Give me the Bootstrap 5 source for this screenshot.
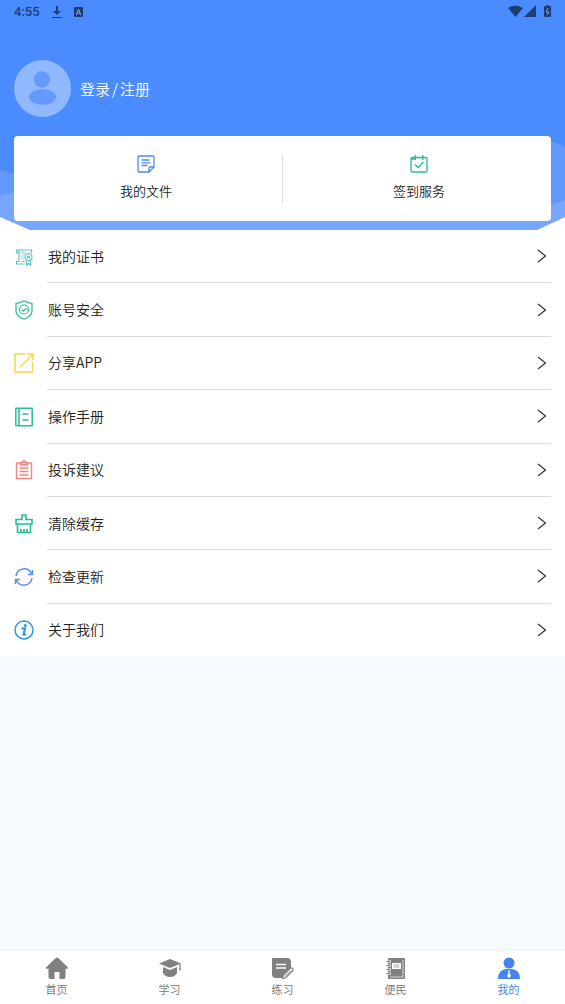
<!DOCTYPE html>
<html lang="zh-CN">
<head>
<meta charset="utf-8">
<meta name="viewport" content="width=device-width, initial-scale=1">
<title>我的</title>
<link href="https://cdn.jsdelivr.net/npm/bootstrap@5.3.0/dist/css/bootstrap.min.css" rel="stylesheet">
<style>
  body { background: #f6faff; color: #222; font-family: "Noto Sans CJK SC", sans-serif; font-size: 14px; font-weight: 350; line-height: 20px; }
  svg { display: block; flex: none; }
  .hero { background: #4a8cff; padding: 0 14px 9px; }
  .hero-art { z-index: 0; }
  .hero > :not(.hero-art) { position: relative; z-index: 1; }
  .status-bar { height: 24px; color: #1f3d73; margin-right: -1px; }
  .clock { font: 500 13px/24px Roboto, sans-serif; }
  .profile { margin-top: 36px; font-size: 15px; color: #fff; gap: 9px; }
  .slash { margin: 0 2px; }
  .quick-card { margin-top: 19px; height: 85px; border-radius: 4px; }
  .quick-card .btn { font-size: 13px; font-weight: 350; line-height: 20px; color: #222; gap: 8px; border: 0; border-radius: 0; padding: 0 0 1px; }
  .quick-card .vr { height: 48px; background: #e2e2e2; opacity: 1; }
  .menu-list { display: grid; grid-auto-rows: 1fr; min-height: 427px; padding: 0 14px; font-size: 14px; }
  .menu-list a { color: #222; gap: 13px; }
  .menu-list .menu-row { border-bottom: 1px solid #dcdcdc; padding: 0 4px 0 1px; }
  .menu-list .menu-row > span { padding-bottom: 1px; }
  .menu-list li:last-child .menu-row { border-color: transparent; }
  .tab-bar { min-height: 54px; border-top: 1px solid #f0f2f5; font-size: 11px; line-height: 16px; }
  .tab-bar .nav-link { color: #747474; padding: 6px 0 7px; gap: 2px; }
  .tab-bar .nav-link.active { color: #3a7cf0; }
</style>
</head>
<body class="d-flex flex-column min-vh-100">

<header class="hero position-relative">
  <svg class="hero-art position-absolute top-0 start-0 w-100 h-100" viewBox="0 0 565 230" preserveAspectRatio="none" aria-hidden="true">
    <path fill="#6399ff" d="M0 170L40 180V230H0zM565 146L545 140V230H565z"/>
    <path fill="#77a5ff" d="M0 196L20 190L60 200H500L551 205L565 200V230H0z"/>
    <path fill="#fbfdff" d="M0 217L30 230H0zM565 217L537 230H565z"/>
  </svg>
  <div class="status-bar d-flex align-items-center justify-content-between">
    <div class="d-flex align-items-center">
      <span class="clock">4:55</span>
      <svg class="ms-2 me-2" width="18" height="14" viewBox="0 0 18 14" fill="currentColor"><path d="M8 1h2v5h3L9 10 5 6h3zM4 12h10v1H4z"/></svg>
      <svg width="9" height="10" viewBox="0 0 9 10"><rect width="9" height="10" rx="1" fill="currentColor"/><path d="M2.2 8L4.5 2.2 6.8 8M3 6.2h3" fill="none" stroke="#7da9f7"/></svg>
    </div>
    <svg width="44" height="16" viewBox="0 0 44 16" fill="currentColor"><path d="M0 4Q7-1 15 4L7.500 13zM28 1v12H16zM37 2h1.500V1h2v1H42q1 0 1 1v9q0 1-1 1h-5q-1 0-1-1V3q0-1 1-1z"/><path d="M40 4l-2 4h3l-2 3" fill="none" stroke="#7da9f7"/></svg>
  </div>
  <div class="profile d-flex align-items-center">
    <svg width="57" height="57" viewBox="0 0 57 57"><circle cx="28.500" cy="28.500" r="28.500" fill="#90b8ff"/><g fill="#649aff"><circle cx="28" cy="19.500" r="8.200"/><ellipse cx="28.500" cy="37" rx="13.500" ry="7.800"/></g></svg>
    <a href="#" class="text-white text-decoration-none">登录<span class="slash">/</span>注册</a>
  </div>
  <div class="quick-card bg-white d-flex align-items-center">
    <button type="button" class="btn flex-fill w-50 d-flex flex-column align-items-center pe-1">
      <svg width="18" height="18" viewBox="0 0 18 18" fill="none" stroke="#4a8cf0" stroke-width="1.300"><path d="M2 1h14q1 0 1 1v10l-5 5H2q-1 0-1-1V2q0-1 1-1zM12 17v-4q0-1 1-1h4M4.500 5h8M4.500 7.800h9M4.500 10.500h6"/></svg>
      <span>我的文件</span>
    </button>
    <div class="vr align-self-center"></div>
    <button type="button" class="btn flex-fill w-50 d-flex flex-column align-items-center ps-1">
      <svg width="18" height="18" viewBox="0 0 18 18" fill="none" stroke="#21bd99" stroke-width="1.300"><rect x="1" y="2.500" width="16" height="14.500" rx="1.200"/><path d="M1 4h4M5.200 0v5M12.800 0v5M5 9.500l3 3 5.500-5.500"/></svg>
      <span>签到服务</span>
    </button>
  </div>
</header>

<main class="flex-grow-1">
  <ul class="menu-list list-unstyled bg-white mb-0">
    <li><a href="#" class="d-flex align-items-center h-100 text-decoration-none">
      <svg width="20" height="20" viewBox="0 0 20 20" fill="none" stroke="#5cc3c6" stroke-width="1.200"><path d="M10.500 17H2.500v-2.500H5M5 14.500V3H2.500v3H5M5 3h12.500v3M7.500 6h4M7.500 9h2M7.500 12h2M7.500 14.500h3"/><circle cx="14.500" cy="10" r="3.500"/><circle cx="14.500" cy="10" r="1.200"/><path d="M12.500 13v5l2-1.500 2 1.500v-5"/></svg>
      <span class="menu-row d-flex flex-grow-1 h-100 align-items-center justify-content-between"><span>我的证书</span><svg width="10" height="14" viewBox="0 0 10 14"><path d="M1 1l7.500 6L1 13" fill="none" stroke="#333" stroke-width="1.200"/></svg></span></a></li>
    <li><a href="#" class="d-flex align-items-center h-100 text-decoration-none">
      <svg width="20" height="20" viewBox="0 0 20 20" fill="none" stroke="#27bd98" stroke-width="1.200"><path d="M10 .8Q6 3.300 2 3.300V11q0 5 8 8.200 8-3.200 8-8.200V3.300Q14 3.300 10 .8z"/><circle cx="10" cy="9.500" r="4.500"/><path d="M7.800 9.500l1.700 1.700 3-3"/></svg>
      <span class="menu-row d-flex flex-grow-1 h-100 align-items-center justify-content-between"><span>账号安全</span><svg width="10" height="14" viewBox="0 0 10 14"><path d="M1 1l7.500 6L1 13" fill="none" stroke="#333" stroke-width="1.200"/></svg></span></a></li>
    <li><a href="#" class="d-flex align-items-center h-100 text-decoration-none">
      <svg width="20" height="20" viewBox="0 0 20 20" fill="none" stroke="#f9d548" stroke-width="1.500"><path d="M11.500 1H1v18h17.500V9M6 14L18.500 1.500M13 1h6v6"/></svg>
      <span class="menu-row d-flex flex-grow-1 h-100 align-items-center justify-content-between"><span>分享APP</span><svg width="10" height="14" viewBox="0 0 10 14"><path d="M1 1l7.500 6L1 13" fill="none" stroke="#333" stroke-width="1.200"/></svg></span></a></li>
    <li><a href="#" class="d-flex align-items-center h-100 text-decoration-none">
      <svg width="20" height="20" viewBox="0 0 20 20" fill="none" stroke="#27bd98" stroke-width="1.500"><rect x="1.800" y="1.200" width="16.400" height="17.600" rx=".5"/><path d="M5 1v18M8.500 7h6M8.500 13h6"/></svg>
      <span class="menu-row d-flex flex-grow-1 h-100 align-items-center justify-content-between"><span>操作手册</span><svg width="10" height="14" viewBox="0 0 10 14"><path d="M1 1l7.500 6L1 13" fill="none" stroke="#333" stroke-width="1.200"/></svg></span></a></li>
    <li><a href="#" class="d-flex align-items-center h-100 text-decoration-none">
      <svg width="20" height="20" viewBox="0 0 20 20" fill="none" stroke="#f28484" stroke-width="1.400"><path d="M6 3H2.500v15.500h15V3H14M5.500 8h9M5.500 11.500h9M5.500 15h9"/><path d="M6.500 5V2.500H8q.3-1.500 2-1.500t2 1.500h1.500V5z" fill="#f9b5b5"/></svg>
      <span class="menu-row d-flex flex-grow-1 h-100 align-items-center justify-content-between"><span>投诉建议</span><svg width="10" height="14" viewBox="0 0 10 14"><path d="M1 1l7.500 6L1 13" fill="none" stroke="#333" stroke-width="1.200"/></svg></span></a></li>
    <li><a href="#" class="d-flex align-items-center h-100 text-decoration-none">
      <svg width="20" height="20" viewBox="0 0 20 20" fill="none" stroke="#22bd98" stroke-width="1.600"><path d="M8 5.500V1h4v4.500h6V10H2V5.500zM3.500 10v8.500h13V10M7 18.500V15M10 18.500V15M13 18.500V15"/></svg>
      <span class="menu-row d-flex flex-grow-1 h-100 align-items-center justify-content-between"><span>清除缓存</span><svg width="10" height="14" viewBox="0 0 10 14"><path d="M1 1l7.500 6L1 13" fill="none" stroke="#333" stroke-width="1.200"/></svg></span></a></li>
    <li><a href="#" class="d-flex align-items-center h-100 text-decoration-none">
      <svg width="20" height="20" viewBox="0 0 20 20" fill="none" stroke="#5a8cf0" stroke-width="1.500"><path d="M2 9A8.200 8.200 0 0 1 17.500 6.500M18 11A8.200 8.200 0 0 1 2.500 13.500M18.500 3v4.500H14M1.500 17v-4.500H6"/></svg>
      <span class="menu-row d-flex flex-grow-1 h-100 align-items-center justify-content-between"><span>检查更新</span><svg width="10" height="14" viewBox="0 0 10 14"><path d="M1 1l7.500 6L1 13" fill="none" stroke="#333" stroke-width="1.200"/></svg></span></a></li>
    <li><a href="#" class="d-flex align-items-center h-100 text-decoration-none">
      <svg width="20" height="20" viewBox="0 0 20 20" fill="none" stroke="#2193ec"><circle cx="10" cy="10" r="9" stroke-width="1.400"/><circle cx="11.200" cy="5.500" r="1.500" fill="#2193ec" stroke="none"/><path d="M7.500 8.500h3.500L9.500 14.500h2.500" stroke-width="2"/></svg>
      <span class="menu-row d-flex flex-grow-1 h-100 align-items-center justify-content-between"><span>关于我们</span><svg width="10" height="14" viewBox="0 0 10 14"><path d="M1 1l7.500 6L1 13" fill="none" stroke="#333" stroke-width="1.200"/></svg></span></a></li>
  </ul>
</main>

<nav class="tab-bar nav nav-fill bg-white sticky-bottom flex-nowrap" aria-label="主导航">
  <a class="nav-link nav-item w-100 d-flex flex-column align-items-center" href="#">
    <svg width="24" height="22" viewBox="0 0 24 22"><path fill="#808080" d="M12 0.500q.7 0 1.300.6L23 10.500q.6 1-.6 1.300H20.500V20q0 2-2 2H14.500v-7h-5v7H5.500q-2 0-2-2v-8.200H1.600Q.4 11.500 1 10.500l9.700-9.400q.6-.6 1.300-.6z"/></svg>
    <span>首页</span></a>
  <a class="nav-link nav-item w-100 d-flex flex-column align-items-center" href="#">
    <svg width="24" height="22" viewBox="0 0 24 22" fill="#808080"><path d="M12 2l11 4.500L12 11 1 6.500z"/><path d="M5 10l7 3 7-3v6q-2 4-7 4t-7-4z"/><path d="M22 6.500V12" fill="none" stroke="#808080" stroke-width="1.200"/><circle cx="22" cy="12.500" r="1"/></svg>
    <span>学习</span></a>
  <a class="nav-link nav-item w-100 d-flex flex-column align-items-center" href="#">
    <svg width="24" height="22" viewBox="0 0 24 22"><path fill="#808080" d="M2 1h14q4 0 4 4v7l-9 9H5q-4 0-4-4V2q0-1 1-1z"/><path d="M5 7.500h10M5 11h10" stroke="#fff" stroke-width="1.400"/><path d="M11.500 22l1-4 7-7q1-.5 2 .5t.5 2l-7 7z" fill="#fff" stroke="#808080" stroke-width="1.100"/><path d="M14 19.500l6-6" stroke="#808080"/></svg>
    <span>练习</span></a>
  <a class="nav-link nav-item w-100 d-flex flex-column align-items-center" href="#">
    <svg width="24" height="22" viewBox="0 0 24 22"><rect x="4" y="1" width="17" height="21" rx="1" fill="#808080"/><path d="M19 3v17H6" fill="none" stroke="#d5d5d5"/><rect x="8" y="6" width="9" height="6" fill="#fff"/><path d="M9.500 8h6M9.500 10h6" stroke="#aaa"/><path d="M3 4.500h4M3 8.500h4M3 12.500h4M3 16.500h4" stroke="#fff" stroke-width="2.500"/><path d="M2.500 4.500h4M2.500 8.500h4M2.500 12.500h4M2.500 16.500h4" stroke="#808080" stroke-width="1.300"/></svg>
    <span>便民</span></a>
  <a class="nav-link nav-item active w-100 d-flex flex-column align-items-center" href="#" aria-current="page">
    <svg width="24" height="22" viewBox="0 0 24 22"><g fill="#4782ee"><circle cx="12" cy="6" r="5.500"/><path d="M1 22q0-9 8-10h6q8 1 8 10z"/></g><path fill="#fff" d="M11 13.500h2l-.5 2L14 19l-2 2-2-2 1.500-3.500z"/></svg>
    <span>我的</span></a>
</nav>

<script src="https://cdn.jsdelivr.net/npm/bootstrap@5.3.0/dist/js/bootstrap.bundle.min.js"></script>
</body>
</html>
